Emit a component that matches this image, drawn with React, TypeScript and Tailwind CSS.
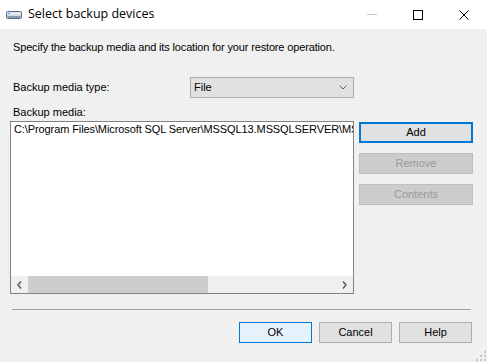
import React from 'react';

const font = { fontFamily: '"Liberation Sans", Arial, sans-serif' };

function DriveIcon() {
    return (
        <svg width="16" height="8" viewBox="0 0 16 8" className="shrink-0">
            <rect x="0.5" y="0.5" width="15" height="7" rx="1" fill="#cfd6e3" stroke="#5a6a86" />
            <rect x="1.5" y="1.5" width="13" height="2" fill="#eef2f8" />
            <rect x="2" y="2" width="2" height="1" fill="#3aa0ff" />
            <rect x="1.5" y="5" width="13" height="2" fill="#8d9ab2" />
        </svg>
    );
}

function WinButton({ children, className }: { children: React.ReactNode; className: string }) {
    return (
        <button
            className={`w-[73px] h-[21px] flex items-center justify-center text-[11px] text-black ${className}`}
        >
            {children}
        </button>
    );
}

export default function App() {
    return (
        <div className="w-[487px] h-[362px] bg-[#f0f0f0] flex flex-col relative overflow-hidden" style={font}>
            {/* Title bar */}
            <div className="h-[29px] bg-white flex items-center shrink-0">
                <div className="ml-[6px] mr-[6px] flex items-center">
                    <DriveIcon />
                </div>
                <span className="text-[12.5px] text-black" style={{ fontFamily: '"Open Sans", "Liberation Sans", sans-serif' }}>
                    Select backup devices
                </span>
                <div className="ml-auto flex items-center h-full">
                    <div className="w-[46px] h-full flex items-center justify-center">
                        <div className="w-[10px] h-px bg-[#c8c8c8]" />
                    </div>
                    <div className="w-[46px] h-full flex items-center justify-center">
                        <div className="w-[10px] h-[10px] border border-black" />
                    </div>
                    <div className="w-[46px] h-full flex items-center justify-center">
                        <svg width="10" height="10" viewBox="0 0 10 10">
                            <path d="M0.5 0.5 L9.5 9.5 M9.5 0.5 L0.5 9.5" stroke="black" strokeWidth="1" />
                        </svg>
                    </div>
                </div>
            </div>

            {/* Body */}
            <div className="flex flex-col text-[11px] leading-[13px] text-black">
                <p className="mt-[12px] ml-[13px] tracking-[-0.15px]">
                    Specify the backup media and its location for your restore operation.
                </p>

                <div className="mt-[23px] flex items-center">
                    <span className="ml-[13px] w-[177px]">Backup media type:</span>
                    <div className="w-[164px] h-[21px] border border-[#adadad] bg-[#e1e1e1] flex items-center pl-[3px] pr-[6px]">
                        <span>File</span>
                        <svg width="8" height="5" viewBox="0 0 8 5" className="ml-auto">
                            <path d="M0.5 0.5 L4 4 L7.5 0.5" fill="none" stroke="#606060" strokeWidth="1" />
                        </svg>
                    </div>
                </div>

                <span className="mt-[8px] ml-[13px]">Backup media:</span>

                <div className="mt-[2px] flex items-start">
                    {/* List box */}
                    <div className="ml-[10px] w-[344px] h-[173px] border border-[#828282] bg-white flex flex-col">
                        <div className="flex-1 overflow-hidden pt-[1px] pl-[3px] whitespace-nowrap tracking-[-0.1px]">
                            C:\Program Files\Microsoft SQL Server\MSSQL13.MSSQLSERVER\MS
                        </div>
                        <div className="h-[17px] bg-[#f0f0f0] flex items-center">
                            <div className="w-[17px] h-full flex items-center justify-center">
                                <svg width="5" height="8" viewBox="0 0 5 8">
                                    <path d="M4 0.5 L1 4 L4 7.5" fill="none" stroke="#606060" strokeWidth="1.6" />
                                </svg>
                            </div>
                            <div className="w-[180px] h-full bg-[#cdcdcd]" />
                            <div className="ml-auto w-[17px] h-full flex items-center justify-center">
                                <svg width="5" height="8" viewBox="0 0 5 8">
                                    <path d="M1 0.5 L4 4 L1 7.5" fill="none" stroke="#606060" strokeWidth="1.6" />
                                </svg>
                            </div>
                        </div>
                    </div>

                    {/* Side buttons */}
                    <div className="ml-[5px] mt-[1px] flex flex-col gap-[10px]">
                        <button className="w-[114px] h-[21px] border-2 border-[#0078d7] bg-[#e1e1e1] text-[11px] text-black">
                            Add
                        </button>
                        <button className="w-[114px] h-[21px] border border-[#bfbfbf] bg-[#cccccc] text-[11px] text-[#9a9a9a]">
                            Remove
                        </button>
                        <button className="w-[114px] h-[21px] border border-[#bfbfbf] bg-[#cccccc] text-[11px] text-[#9a9a9a]">
                            Contents
                        </button>
                    </div>
                </div>

                {/* Separator */}
                <div className="mt-[15px] ml-[12px] w-[459px] h-px bg-[#a0a0a0]" />

                {/* Bottom buttons */}
                <div className="mt-[12px] mr-[15px] flex justify-end gap-[7px]">
                    <WinButton className="border border-[#0078d7] bg-[#e5f1fb]">OK</WinButton>
                    <WinButton className="border border-[#adadad] bg-[#e1e1e1]">Cancel</WinButton>
                    <WinButton className="border border-[#adadad] bg-[#e1e1e1]">Help</WinButton>
                </div>
            </div>

            {/* Resize grip */}
            <svg width="10" height="10" viewBox="0 0 10 10" className="absolute right-[1px] bottom-[1px]">
                <rect x="8" y="0" width="2" height="2" fill="#c8c8c8" />
                <rect x="4" y="4" width="2" height="2" fill="#c8c8c8" />
                <rect x="8" y="4" width="2" height="2" fill="#c8c8c8" />
                <rect x="0" y="8" width="2" height="2" fill="#c8c8c8" />
                <rect x="4" y="8" width="2" height="2" fill="#c8c8c8" />
                <rect x="8" y="8" width="2" height="2" fill="#c8c8c8" />
            </svg>
        </div>
    );
}
